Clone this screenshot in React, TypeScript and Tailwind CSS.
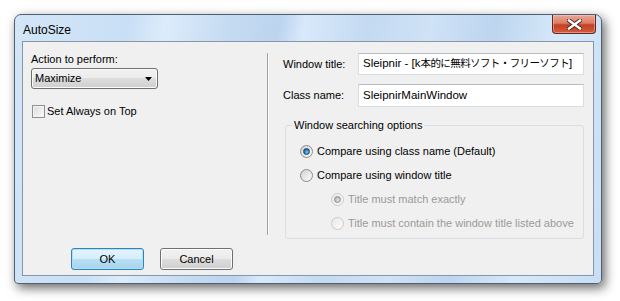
import type { ReactNode } from 'react';

const font = { fontFamily: '"Liberation Sans", "Noto Sans CJK JP", sans-serif' };

const Radio = ({ checked = false, disabled = false }: { checked?: boolean; disabled?: boolean }) => (
  <span
    className={
      disabled
        ? 'flex h-[13px] w-[13px] shrink-0 items-center justify-center rounded-full border border-[#c9c9c9] bg-[linear-gradient(135deg,#e9e9e9,#fafafa)]'
        : 'flex h-[13px] w-[13px] shrink-0 items-center justify-center rounded-full border border-[#8a8a8a] bg-[linear-gradient(135deg,#d2d2d2,#fdfdfd)]'
    }
  >
    {checked && (
      <span
        className={
          disabled
            ? 'h-[7px] w-[7px] rounded-full border border-[#8c8c8c] bg-[radial-gradient(circle_at_60%_65%,#e6e6e6,#9d9d9d)]'
            : 'h-[7px] w-[7px] rounded-full border border-[#1b4a6e] bg-[radial-gradient(circle_at_60%_65%,#7fd0ff,#1a6fb0_60%,#0d3f66)]'
        }
      />
    )}
  </span>
);

const RadioRow = ({ children, checked, disabled }: { children: ReactNode; checked?: boolean; disabled?: boolean }) => (
  <div className="flex h-[16px] items-center gap-[4px]">
    <Radio checked={checked} disabled={disabled} />
    <span className={disabled ? 'text-[#9a9a9a]' : 'text-black'}>{children}</span>
  </div>
);

const Button = ({ children, primary = false }: { children: ReactNode; primary?: boolean }) => (
  <button
    className={
      primary
        ? 'flex h-[22px] w-[73px] items-center justify-center rounded-[3px] border border-[#3c7fb1] bg-[linear-gradient(#e5f4fc_0%,#d6eefb_50%,#b9dff3_50%,#a8d4ee_100%)] shadow-[inset_0_0_0_1px_#9ee6fd]'
        : 'flex h-[22px] w-[73px] items-center justify-center rounded-[3px] border border-[#707070] bg-[linear-gradient(#f2f2f2_0%,#ebebeb_50%,#dddddd_50%,#cfcfcf_100%)] shadow-[inset_0_0_0_1px_#fcfcfc]'
    }
  >
    {children}
  </button>
);

const CloseIcon = () => (
  <svg width="15" height="11" viewBox="0 0 15 11">
    <path d="M2 1.5 L13 9.5 M13 1.5 L2 9.5" stroke="#4a2a25" strokeWidth="4.2" strokeLinecap="square" />
    <path d="M2 1.5 L13 9.5 M13 1.5 L2 9.5" stroke="#ffffff" strokeWidth="2.4" strokeLinecap="square" />
  </svg>
);

const App = () => {
  return (
    <div className="h-[301px] w-[620px] bg-white pl-[14px] pt-[14px] text-[11px] text-black" style={font}>
      <div className="flex h-[270px] w-[588px] flex-col rounded-t-[7px] rounded-b-[4px] border border-[#4f6072] bg-[linear-gradient(100deg,#d3e6f8_0%,#c9dff5_18%,#dcecfb_24%,#c5dbf2_34%,#bcd4ef_42%,#d8e9fa_46%,#c4daf2_56%,#cfe2f6_66%,#bdd5ef_76%,#d6e8f9_86%,#c8def4_100%)] shadow-[3px_4px_11px_rgba(0,0,0,0.6)]">
        <div className="flex h-[26px] items-start justify-between pl-[8px] pr-[5px]">
          <p className="mt-[6px] text-[12px]">AutoSize</p>
          <div className="flex h-[19px] w-[44px] items-center justify-center rounded-b-[4px] border border-t-0 border-[#5e2a22] bg-[linear-gradient(#e9a898_0%,#dc7d68_45%,#c5401f_55%,#d35c3e_100%)] shadow-[inset_0_0_0_1px_rgba(255,210,200,0.45)]">
            <CloseIcon />
          </div>
        </div>

        <div className="mx-[7px] flex h-[235px] flex-col border border-[#8796a8] bg-[#f0f0f0]">
          <div className="flex h-[206px]">
            <div className="flex w-[244px] flex-col pl-[8px] pt-[10px]">
              <p className="leading-[14px]">Action to perform:</p>
              <div className="mt-[2px] flex h-[21px] w-[127px] items-center justify-between rounded-[3px] border border-[#707070] bg-[linear-gradient(#f2f2f2_0%,#ebebeb_50%,#dddddd_50%,#cfcfcf_100%)] pl-[3px] pr-[5px] shadow-[inset_0_0_0_1px_#fafafa]">
                <span>Maximize</span>
                <svg width="7" height="4" viewBox="0 0 7 4">
                  <path d="M0 0 H7 L3.5 4 Z" fill="#000" />
                </svg>
              </div>
              <div className="mt-[14px] flex items-center gap-[2px] pl-[1px]">
                <span className="h-[13px] w-[13px] border border-[#8f8f8f] bg-[linear-gradient(135deg,#dcdcdc,#fbfbfb)] shadow-[inset_0_0_0_1px_#f4f4f4]" />
                <span>Set Always on Top</span>
              </div>
            </div>

            <div className="mt-[11px] h-[182px] w-[2px] border-l border-[#a0a0a0] bg-white" />

            <div className="flex flex-1 flex-col pl-[14px] pt-[11px]">
              <div className="flex items-center">
                <span className="w-[75px]">Window title:</span>
                <div className="flex h-[22px] w-[226px] items-center overflow-hidden whitespace-nowrap border border-[#d8dde3] border-t-[#b5bcc4] bg-white pl-[4px] text-[11.5px]">
                  Sleipnir - [k<span className="text-[10.5px] tracking-[-0.6px]">本的に無料ソフト・フリーソフト</span>]
                </div>
              </div>
              <div className="mt-[9px] flex items-center">
                <span className="w-[75px]">Class name:</span>
                <div className="flex h-[23px] w-[226px] items-center border border-[#d8dde3] border-t-[#b5bcc4] bg-white pl-[4px] text-[11.5px]">
                  SleipnirMainWindow
                </div>
              </div>

              <div className="relative ml-[2px] mt-[18px] flex h-[114px] w-[299px] flex-col gap-[8px] rounded-[3px] border border-[#d5dfe5] pl-[14px] pt-[17px]">
                <span className="absolute -top-[8px] left-[6px] bg-[#f0f0f0] px-[2px] leading-[14px]">Window searching options</span>
                <RadioRow checked>Compare using class name (Default)</RadioRow>
                <RadioRow>Compare using window title</RadioRow>
                <div className="flex flex-col gap-[8px] pl-[31px]">
                  <RadioRow checked disabled>
                    Title must match exactly
                  </RadioRow>
                  <RadioRow disabled>Title must contain the window title listed above</RadioRow>
                </div>
              </div>
            </div>
          </div>

          <div className="flex gap-[16px] pl-[48px]">
            <Button primary>OK</Button>
            <Button>Cancel</Button>
          </div>
        </div>
      </div>
    </div>
  );
};

export default App;
